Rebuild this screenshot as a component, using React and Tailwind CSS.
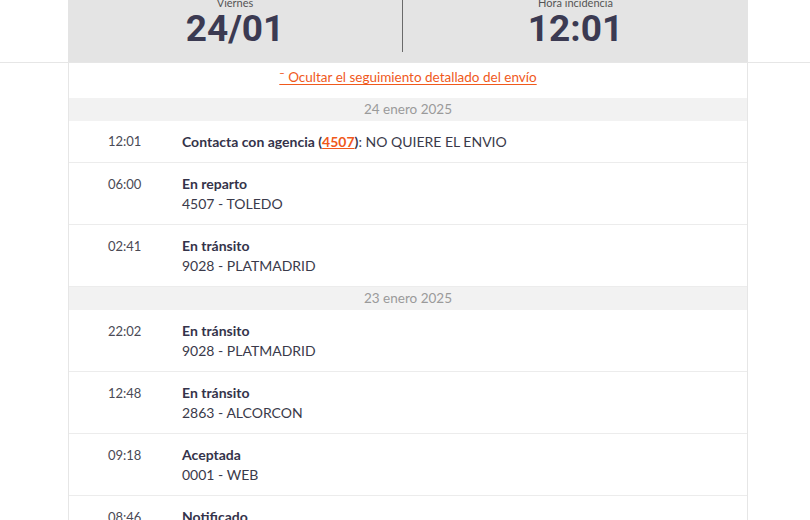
const days = [
  {
    label: '24 enero 2025',
    rows: [
      { time: '12:01', contact: true },
      { time: '06:00', title: 'En reparto', sub: '4507 - TOLEDO' },
      { time: '02:41', title: 'En tránsito', sub: '9028 - PLATMADRID' },
    ],
  },
  {
    label: '23 enero 2025',
    rows: [
      { time: '22:02', title: 'En tránsito', sub: '9028 - PLATMADRID' },
      { time: '12:48', title: 'En tránsito', sub: '2863 - ALCORCON' },
      { time: '09:18', title: 'Aceptada', sub: '0001 - WEB' },
      { time: '08:46', title: 'Notificado', sub: '0001 - WEB' },
    ],
  },
];

function Row({ row }) {
  if (row.contact) {
    return (
      <div className="flex h-[42px] items-center border-b border-[#ececec]">
        <div className="w-[113px] pl-[39px] text-[13px] text-[#4a4a55]">{row.time}</div>
        <div className="text-[14px] text-[#3a3a4a]">
          <span className="font-bold text-[#34334a]">
            Contacta con agencia (<span className="text-[#f0591c] underline">4507</span>)
          </span>
          : NO QUIERE EL ENVIO
        </div>
      </div>
    );
  }
  return (
    <div className="flex h-[62px] items-start border-b border-[#ececec] pt-[11px]">
      <div className="w-[113px] pl-[39px] text-[13px] leading-[20px] text-[#4a4a55]">{row.time}</div>
      <div className="text-[14px] leading-[20px]">
        <div className="font-bold text-[#34334a]">{row.title}</div>
        <div className="text-[#3a3a4a]">{row.sub}</div>
      </div>
    </div>
  );
}

export default function App() {
  return (
    <div className="h-[520px] overflow-hidden bg-white font-['Lato',sans-serif]">
      <div className="ml-[68px] w-[680px] -mt-[4px]">
        <div className="flex h-[66px] bg-[#e4e4e4]">
          <div className="flex w-[334px] flex-col items-center">
            <div className="text-[11px] leading-[13px] text-[#555]">Viernes</div>
            <div className="font-['Roboto',sans-serif] text-[37px] font-bold leading-[40px] text-[#3b3a52]">24/01</div>
          </div>
          <div className="mb-[10px] w-px bg-[#6a6a6a]" />
          <div className="flex flex-1 flex-col items-center">
            <div className="text-[11px] leading-[13px] text-[#555]">Hora incidencia</div>
            <div className="font-['Roboto',sans-serif] text-[37px] font-bold leading-[40px] text-[#3b3a52]">12:01</div>
          </div>
        </div>
      </div>
      <div className="border-t border-[#e6e6e6]">
        <div className="ml-[68px] w-[680px] border-x border-[#e6e6e6]">
          <div className="flex h-[35px] items-center justify-center pb-[6px] text-[13.5px] text-[#f0591c]">
            <span className="underline underline-offset-2">¯ Ocultar el seguimiento detallado del envío</span>
          </div>
          {days.map((d) => (
            <div key={d.label}>
              <div className="flex h-[23px] items-center justify-center bg-[#f2f2f2] text-[13.5px] text-[#9a9a9a]">
                {d.label}
              </div>
              {d.rows.map((r) => (
                <Row key={d.label + r.time} row={r} />
              ))}
            </div>
          ))}
        </div>
      </div>
    </div>
  );
}
